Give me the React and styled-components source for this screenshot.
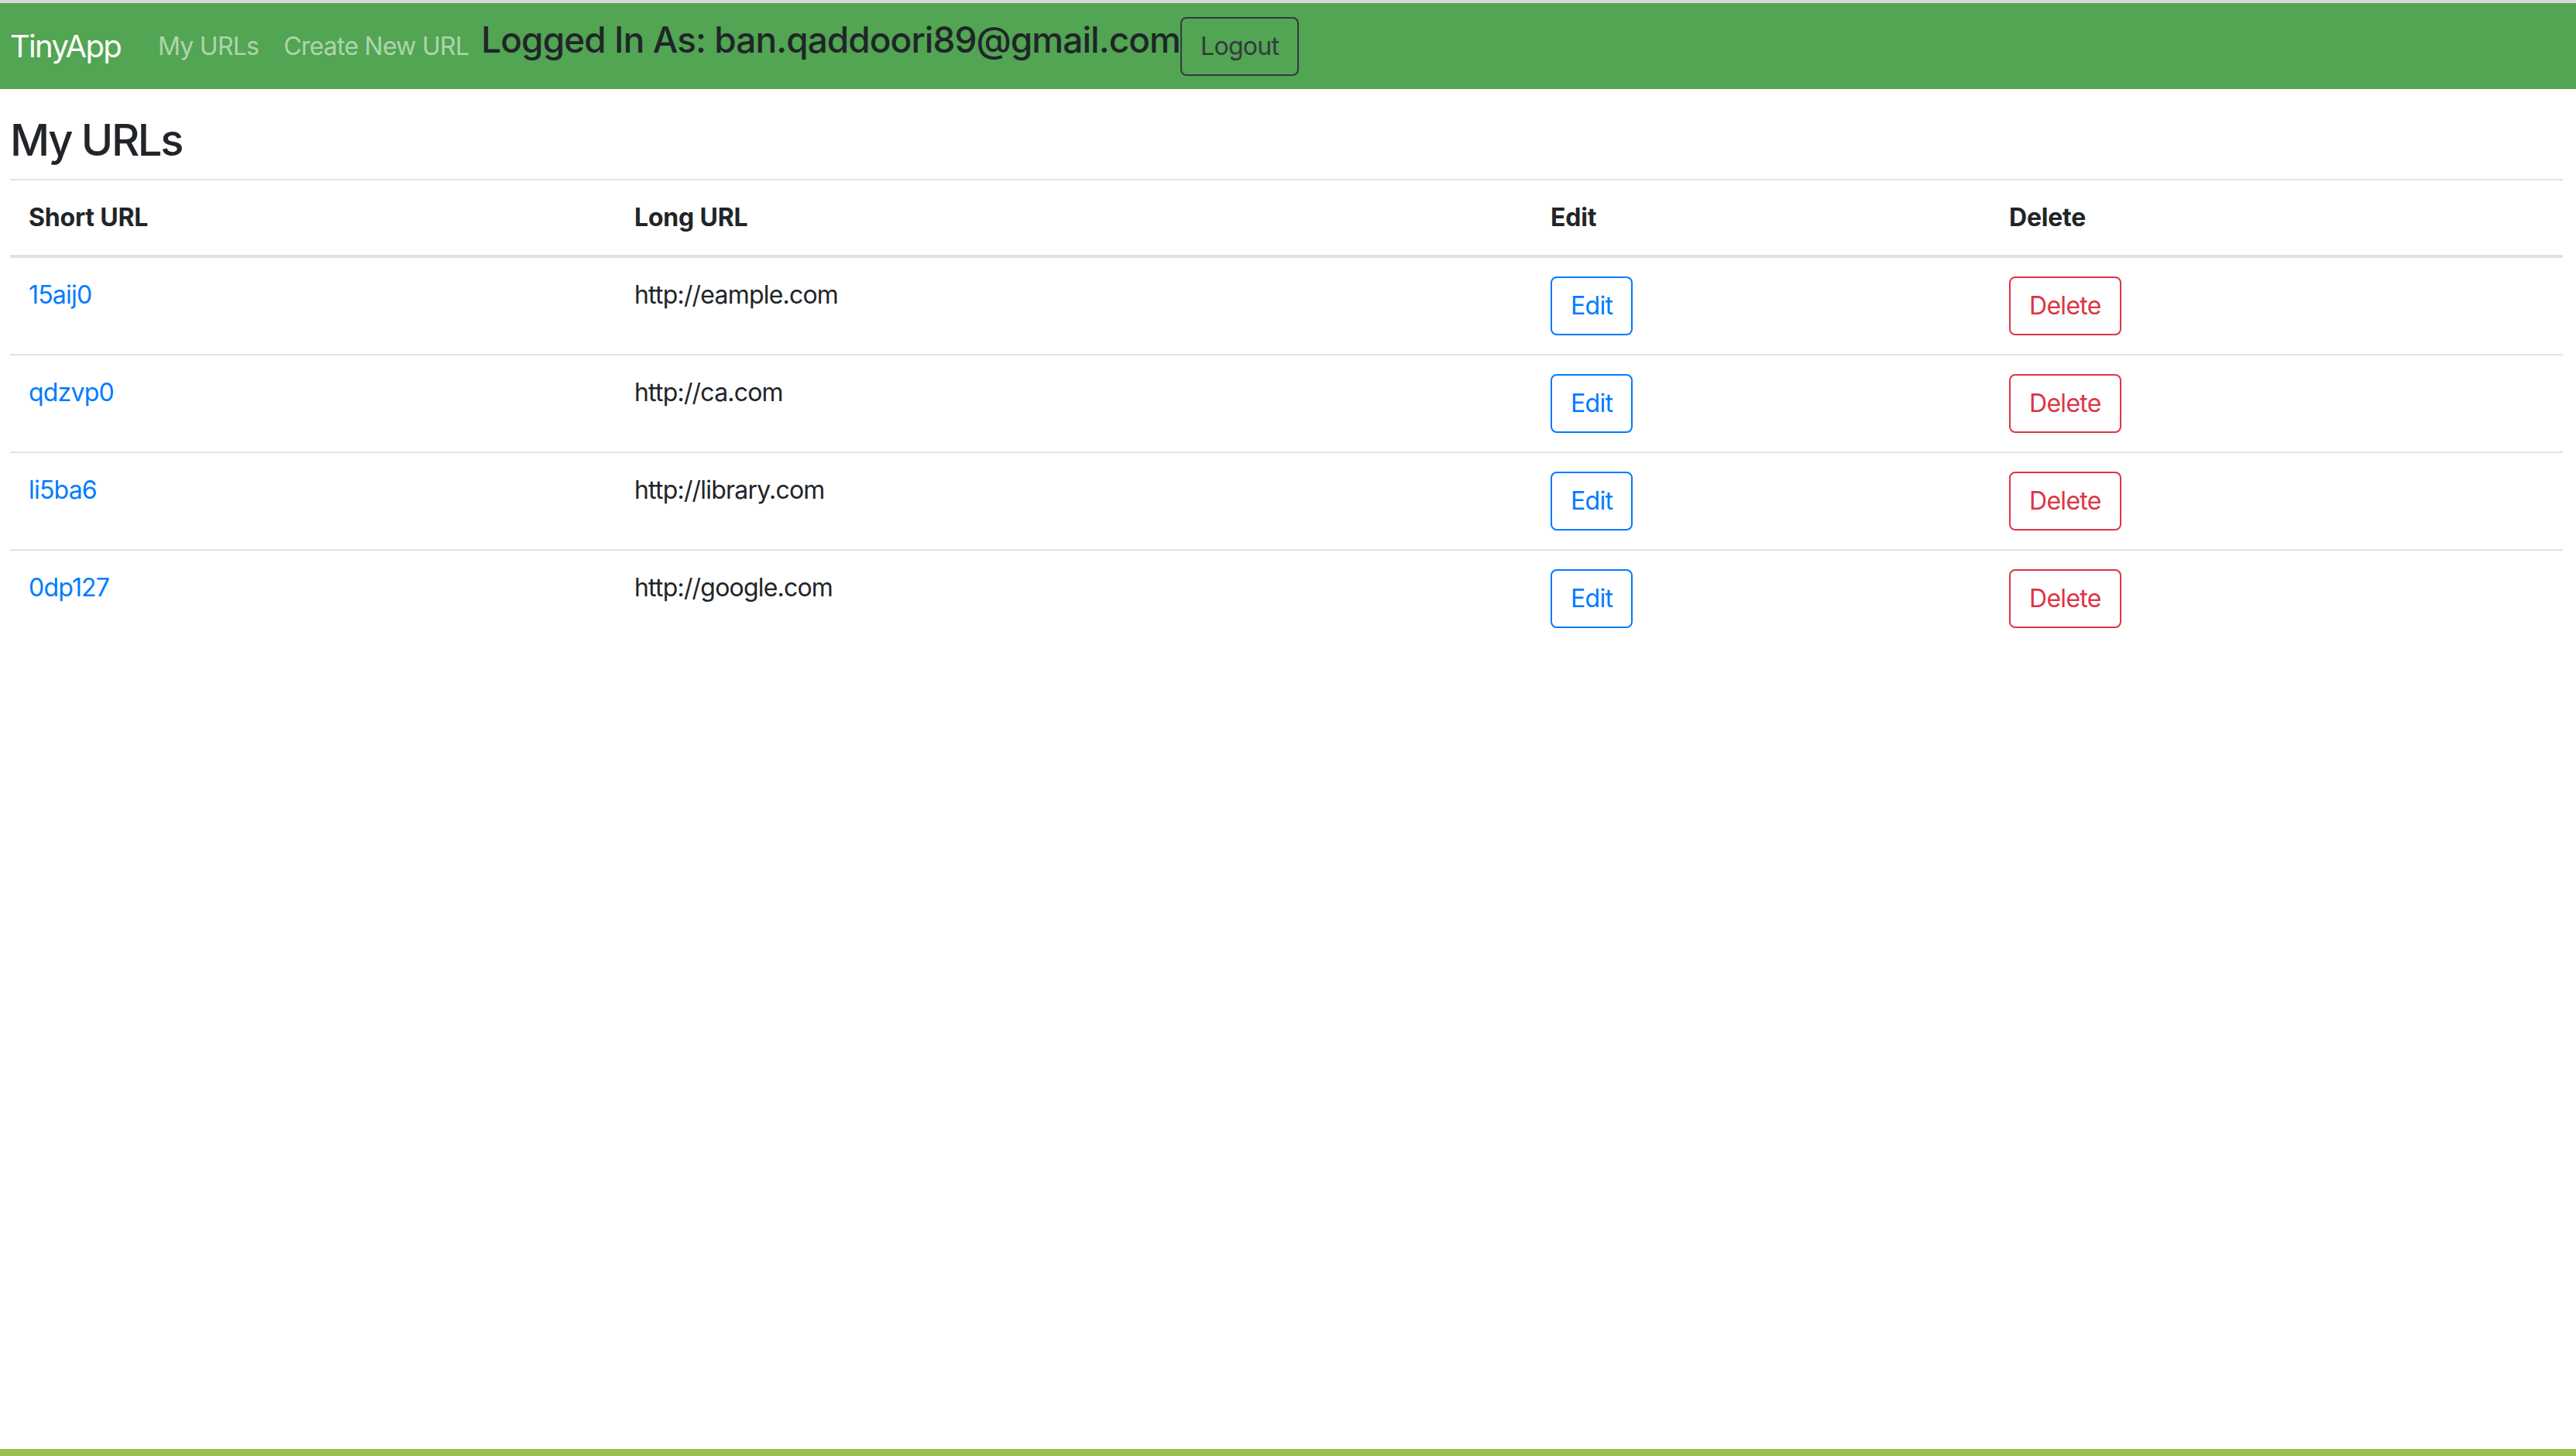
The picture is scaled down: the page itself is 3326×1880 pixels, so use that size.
import styled, { createGlobalStyle } from "styled-components";

const GlobalStyle = createGlobalStyle`
  html, body {
    margin: 0;
    padding: 0;
    background: #ffffff;
  }
  body {
    font-family: "Inter", "Liberation Sans", sans-serif;
    color: #212529;
  }
  * {
    box-sizing: border-box;
  }
`;

const Page = styled.div`
  min-height: 100vh;
  display: flex;
  flex-direction: column;
`;

const Navbar = styled.nav`
  display: flex;
  flex-direction: row;
  align-items: center;
  height: 115px;
  padding: 0 0 0 13px;
  background-color: #52a552;
  border-top: 4px solid #d5d9de;
`;

const Brand = styled.a`
  font-size: 40px;
  line-height: 60px;
  color: #ffffff;
  margin-right: 32px;
  text-decoration: none;
  letter-spacing: -1.7px;
`;

const NavLink = styled.a`
  font-size: 32px;
  line-height: 48px;
  padding: 0 16px;
  color: rgba(255, 255, 255, 0.55);
  text-decoration: none;
  letter-spacing: -0.75px;
`;

const LoggedIn = styled.h4`
  margin: 0 0 16px 0;
  font-size: 46px;
  line-height: 1.2;
  font-weight: 500;
  color: #212529;
  letter-spacing: -0.95px;
`;

const OutlineButton = styled.button`
  font-family: inherit;
  font-size: 32px;
  line-height: 48px;
  padding: 12px 24px;
  border: 2px solid ${(p) => p.$color};
  border-radius: 8px;
  background: transparent;
  color: ${(p) => p.$color};
  letter-spacing: -0.7px;
  cursor: pointer;
`;

const Main = styled.main`
  flex: 1;
  padding: 0 17px 0 13px;
`;

const Heading = styled.h3`
  margin: 33px 0 16px 0;
  font-size: 56px;
  line-height: 1.2;
  font-weight: 500;
  letter-spacing: -2.3px;
`;

const Table = styled.table`
  width: 100%;
  border-collapse: collapse;
  table-layout: fixed;
  font-size: 32px;
  line-height: 48px;
  letter-spacing: -0.8px;
`;

const HeadCell = styled.th`
  width: ${(p) => p.$w}px;
  text-align: left;
  font-weight: 700;
  padding: 24px;
  border-top: 2px solid #dee2e6;
  border-bottom: 4px solid #dee2e6;
  vertical-align: bottom;
  letter-spacing: -0.2px;
`;

const Cell = styled.td`
  padding: 24px;
  border-top: 2px solid #dee2e6;
  vertical-align: top;
`;

const ShortLink = styled.a`
  color: #007bff;
  text-decoration: none;
`;

const BottomBar = styled.div`
  height: 9px;
  background-color: #9abd4b;
`;

const urls = [
  { id: "15aij0", long: "http://eample.com" },
  { id: "qdzvp0", long: "http://ca.com" },
  { id: "li5ba6", long: "http://library.com" },
  { id: "0dp127", long: "http://google.com" },
];

const App = () => {
  return (
    <Page>
      <GlobalStyle />
      <Navbar>
        <Brand href="#">TinyApp</Brand>
        <NavLink href="#">My URLs</NavLink>
        <NavLink href="#">Create New URL</NavLink>
        <LoggedIn>Logged In As: ban.qaddoori89@gmail.com</LoggedIn>
        <OutlineButton $color="#343a40">Logout</OutlineButton>
      </Navbar>
      <Main>
        <Heading>My URLs</Heading>
        <Table>
          <thead>
            <tr>
              <HeadCell $w={782}>Short URL</HeadCell>
              <HeadCell $w={1183}>Long URL</HeadCell>
              <HeadCell $w={592}>Edit</HeadCell>
              <HeadCell $w={739}>Delete</HeadCell>
            </tr>
          </thead>
          <tbody>
            {urls.map((u) => (
              <tr key={u.id}>
                <Cell>
                  <ShortLink href="#">{u.id}</ShortLink>
                </Cell>
                <Cell>{u.long}</Cell>
                <Cell>
                  <OutlineButton $color="#007bff">Edit</OutlineButton>
                </Cell>
                <Cell>
                  <OutlineButton $color="#dc3545">Delete</OutlineButton>
                </Cell>
              </tr>
            ))}
          </tbody>
        </Table>
      </Main>
      <BottomBar />
    </Page>
  );
};

export default App;
